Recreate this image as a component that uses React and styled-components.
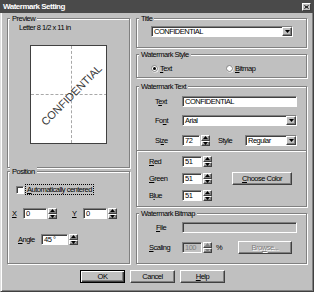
import React from 'react';
import styled, { createGlobalStyle, css } from 'styled-components';

const GlobalStyle = createGlobalStyle`
  html, body {
    margin: 0;
    padding: 0;
    background: #c0c0c0;
  }
  body {
    font-family: "Liberation Sans", Arial, sans-serif;
    font-size: 7.5px;
    letter-spacing: -0.5px;
    color: #000;
  }
  * {
    box-sizing: border-box;
  }
`;

const raised = css`
  background: #c0c0c0;
  border: 1px solid;
  border-color: #fff #404040 #404040 #fff;
`;

const sunken = css`
  border: 1px solid;
  border-color: #808080 #fff #fff #808080;
  box-shadow: inset 1px 1px #404040;
`;

const Window = styled.div`
  width: 314px;
  height: 292px;
  display: flex;
  flex-direction: column;
  background: #c0c0c0;
  overflow: hidden;
`;

const TitleBar = styled.div`
  height: 13px;
  flex-shrink: 0;
  display: flex;
  align-items: center;
  justify-content: space-between;
  padding: 0 3px;
  background: #4a4a4a;
  color: #fff;
  font-weight: bold;
  font-size: 8px;
`;

const CloseButton = styled.div`
  ${raised};
  width: 9px;
  height: 8px;
  display: grid;
  place-items: center;
`;

const Frame = styled.div`
  flex: 1;
  display: flex;
  flex-direction: column;
  padding: 5px 4px 7px 6px;
  border: 1px solid;
  border-top: none;
  border-color: #dfdfdf #404040 #404040 #dfdfdf;
  box-shadow: inset 1px 0 #fff, inset -1px -1px #808080;
`;

const Columns = styled.div`
  display: flex;
  gap: 6px;
`;

const Column = styled.div`
  width: ${(p) => p.$w}px;
  display: flex;
  flex-direction: column;
  gap: ${(p) => p.$gap || 0}px;
`;

const Group = styled.div`
  position: relative;
  height: ${(p) => p.$h}px;
  margin-top: ${(p) => p.$mt || 0}px;
  border: 1px solid #808080;
  box-shadow: inset 1px 1px #fff, 1px 1px #fff;
  display: flex;
  flex-direction: column;
  padding-top: ${(p) => p.$pt || 0}px;
`;

const Legend = styled.span`
  position: absolute;
  top: -5px;
  left: 2px;
  padding: 0 2px;
  line-height: 9px;
  background: #c0c0c0;
`;

const Row = styled.div`
  display: flex;
  align-items: center;
  height: ${(p) => p.$h || 11}px;
  padding-left: ${(p) => p.$pl || 0}px;
  margin-top: ${(p) => p.$mt || 0}px;
`;

const Label = styled.span`
  width: ${(p) => p.$w}px;
  margin-left: ${(p) => p.$ml || 0}px;
  flex-shrink: 0;
  white-space: nowrap;
  line-height: 9px;
`;

const Field = styled.div`
  ${sunken};
  width: ${(p) => p.$w}px;
  height: 11px;
  flex-shrink: 0;
  padding-left: 2px;
  line-height: 9px;
  white-space: nowrap;
  overflow: hidden;
  background: ${(p) => (p.$disabled ? '#c0c0c0' : '#fff')};
  color: ${(p) => (p.$disabled ? '#808080' : '#000')};
`;

const ComboBox = styled(Field)`
  display: flex;
  justify-content: space-between;
  padding-right: 0;
`;

const DropButton = styled.div`
  ${raised};
  width: 10px;
  height: 9px;
  display: grid;
  place-items: center;
  box-shadow: inset -1px -1px #808080;
`;

const Spinner = styled.div`
  width: 9px;
  height: 11px;
  flex-shrink: 0;
  margin-left: 1px;
  display: flex;
  flex-direction: column;
`;

const SpinHalf = styled.div`
  ${raised};
  flex: 1;
  display: grid;
  place-items: center;
  box-shadow: inset -1px -1px #808080;
`;

const PushButton = styled.div`
  ${raised};
  width: ${(p) => p.$w}px;
  height: 13px;
  flex-shrink: 0;
  margin-left: ${(p) => p.$ml || 0}px;
  display: grid;
  place-items: center;
  line-height: 9px;
  box-shadow: inset -1px -1px #808080;
  ${(p) =>
    p.$default &&
    css`
      border: 1px solid #000;
      box-shadow: inset 1px 1px #fff, inset -1px -1px #404040, inset -2px -2px #808080;
    `}
  ${(p) =>
    p.$disabled &&
    css`
      color: #808080;
      text-shadow: 1px 1px #fff;
    `}
`;

const Separator = styled.div`
  margin-top: ${(p) => p.$mt || 0}px;
  height: 2px;
  border-top: 1px solid #808080;
  border-bottom: 1px solid #fff;
`;

const Checkbox = styled.div`
  ${sunken};
  width: 8px;
  height: 8px;
  background: #fff;
  flex-shrink: 0;
`;

const FocusLabel = styled.span`
  margin-left: 2px;
  padding: 0 1px;
  line-height: 9px;
  outline: 1px dotted #000;
  outline-offset: 0;
`;

const RadioOption = styled.div`
  width: ${(p) => p.$w || 'auto'}px;
  display: flex;
  align-items: center;
  gap: 2px;
  line-height: 9px;
`;

const Radio = styled.div`
  width: 7px;
  height: 7px;
  border-radius: 50%;
  background: #fff;
  border: 1px solid #808080;
  box-shadow: 0.5px 0.5px #fff;
  display: grid;
  place-items: center;
  &::after {
    content: '';
    width: 3px;
    height: 3px;
    border-radius: 50%;
    background: ${(p) => (p.$checked ? '#000' : 'transparent')};
  }
`;

const Caption = styled.div`
  padding-left: 11px;
  line-height: 9px;
`;

const Page = styled.div`
  align-self: center;
  margin-top: 13px;
  width: 77px;
  height: 99px;
  background: #fff;
  border: 1px solid #404040;
  display: grid;
  overflow: hidden;
  & > * {
    grid-area: 1 / 1;
  }
`;

const VGuide = styled.div`
  justify-self: center;
  width: 0;
  height: 100%;
  border-left: 1px dashed #a8a8a8;
`;

const HGuide = styled.div`
  align-self: center;
  width: 100%;
  height: 0;
  border-top: 1px dashed #a8a8a8;
`;

const Watermark = styled.div`
  place-self: center;
  transform: rotate(-45deg);
  font-size: 11px;
  letter-spacing: 0;
  color: #3a3a3a;
  white-space: nowrap;
`;

const Percent = styled.span`
  width: 26px;
  padding-left: 4px;
  flex-shrink: 0;
`;

const ButtonRow = styled.div`
  display: flex;
  gap: 5px;
  margin-top: 6px;
  padding-left: 73px;
`;

const ColorSection = styled.div`
  display: flex;
  align-items: center;
  margin-top: 4px;
`;

const ColorRows = styled.div`
  display: flex;
  flex-direction: column;
`;

const Arrow = ({ up, color = '#000' }) => (
  <svg width="5" height="3" viewBox="0 0 5 3">
    <path d={up ? 'M0 3h5L2.5 0z' : 'M0 0h5L2.5 3z'} fill={color} />
  </svg>
);

const Spin = ({ disabled }) => (
  <Spinner>
    <SpinHalf>
      <Arrow up color={disabled ? '#808080' : '#000'} />
    </SpinHalf>
    <SpinHalf>
      <Arrow color={disabled ? '#808080' : '#000'} />
    </SpinHalf>
  </Spinner>
);

const Combo = ({ w, value }) => (
  <ComboBox $w={w}>
    <span>{value}</span>
    <DropButton>
      <Arrow />
    </DropButton>
  </ComboBox>
);

export default function App() {
  return (
    <Window>
      <GlobalStyle />
      <TitleBar>
        <span>Watermark Setting</span>
        <CloseButton>
          <svg width="5" height="4" viewBox="0 0 5 4">
            <path d="M0.5 0.5l4 3M4.5 0.5l-4 3" stroke="#000" strokeWidth="1" />
          </svg>
        </CloseButton>
      </TitleBar>
      <Frame>
        <Columns>
          <Column $w={123} $gap={3}>
            <Group $h={150} $pt={4}>
              <Legend>Preview</Legend>
              <Caption>Letter 8 1/2 x 11 in</Caption>
              <Page>
                <VGuide />
                <HGuide />
                <Watermark>CONFIDENTIAL</Watermark>
              </Page>
            </Group>
            <Group $h={93} $pt={12}>
              <Legend>Position</Legend>
              <Row $pl={8}>
                <Checkbox />
                <FocusLabel>
                  <u>A</u>utomatically centered
                </FocusLabel>
              </Row>
              <Row $pl={4} $mt={13}>
                <Label $w={11}>
                  <u>X</u>
                </Label>
                <Field $w={24}>0</Field>
                <Spin />
                <Label $w={11} $ml={15}>
                  <u>Y</u>
                </Label>
                <Field $w={24}>0</Field>
                <Spin />
              </Row>
              <Row $pl={10} $mt={15}>
                <Label $w={23}>
                  <u>A</u>ngle
                </Label>
                <Field $w={27}>45 °</Field>
                <Spin />
              </Row>
            </Group>
          </Column>
          <Column $w={171}>
            <Group $h={30} $pt={7}>
              <Legend>Title</Legend>
              <Row $pl={14}>
                <Combo w={142} value="CONFIDENTIAL" />
              </Row>
            </Group>
            <Group $h={24} $pt={9} $mt={6}>
              <Legend>Watermark Style</Legend>
              <Row $pl={14} $h={9}>
                <RadioOption $w={75}>
                  <Radio $checked />
                  <span>
                    <u>T</u>ext
                  </span>
                </RadioOption>
                <RadioOption>
                  <Radio />
                  <span>
                    <u>B</u>itmap
                  </span>
                </RadioOption>
              </Row>
            </Group>
            <Group $h={121} $pt={9} $mt={8}>
              <Legend>Watermark Text</Legend>
              <Row $pl={18}>
                <Label $w={27}>
                  T<u>e</u>xt
                </Label>
                <Field $w={115}>CONFIDENTIAL</Field>
              </Row>
              <Row $pl={18} $mt={8}>
                <Label $w={27}>
                  Fo<u>n</u>t
                </Label>
                <Combo w={115} value="Arial" />
              </Row>
              <Row $pl={18} $mt={9}>
                <Label $w={27}>
                  Si<u>z</u>e
                </Label>
                <Field $w={18}>72</Field>
                <Spin />
                <Label $w={27} $ml={8}>
                  Style
                </Label>
                <Combo w={52} value="Regular" />
              </Row>
              <Separator $mt={4} />
              <ColorSection>
                <ColorRows>
                  <Row $pl={12}>
                    <Label $w={33}>
                      <u>R</u>ed
                    </Label>
                    <Field $w={20}>51</Field>
                    <Spin />
                  </Row>
                  <Row $pl={12} $mt={6}>
                    <Label $w={33}>
                      <u>G</u>reen
                    </Label>
                    <Field $w={20}>51</Field>
                    <Spin />
                  </Row>
                  <Row $pl={12} $mt={6}>
                    <Label $w={33}>
                      B<u>l</u>ue
                    </Label>
                    <Field $w={20}>51</Field>
                    <Spin />
                  </Row>
                </ColorRows>
                <PushButton $w={60} $ml={20}>
                  <span>
                    <u>C</u>hoose Color
                  </span>
                </PushButton>
              </ColorSection>
            </Group>
            <Group $h={51} $pt={8} $mt={6}>
              <Legend>Watermark Bitmap</Legend>
              <Row $pl={19}>
                <Label $w={26}>
                  <u>F</u>ile
                </Label>
                <Field $w={115} $disabled />
              </Row>
              <Row $pl={12} $mt={9}>
                <Label $w={33}>
                  <u>S</u>caling
                </Label>
                <Field $w={20} $disabled>
                  100
                </Field>
                <Spin disabled />
                <Percent>%</Percent>
                <PushButton $w={54} $disabled>
                  <span>
                    Bro<u>w</u>se...
                  </span>
                </PushButton>
              </Row>
            </Group>
          </Column>
        </Columns>
        <ButtonRow>
          <PushButton $w={45} $default>
            OK
          </PushButton>
          <PushButton $w={45}>Cancel</PushButton>
          <PushButton $w={45}>
            <span>
              <u>H</u>elp
            </span>
          </PushButton>
        </ButtonRow>
      </Frame>
    </Window>
  );
}
